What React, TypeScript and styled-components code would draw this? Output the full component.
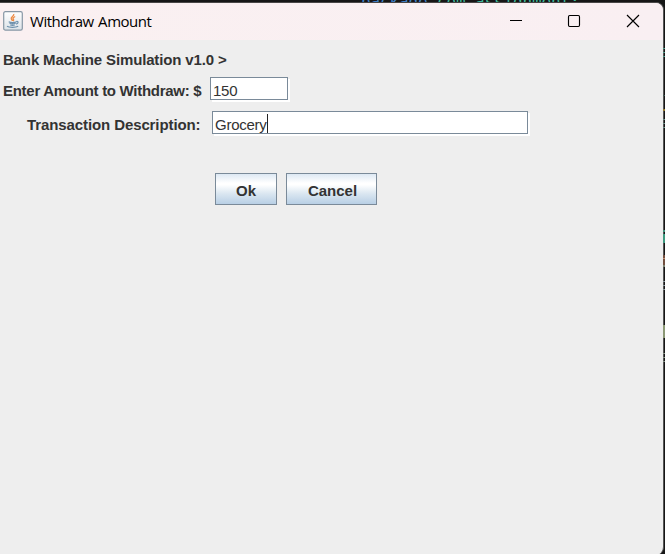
import React from "react";
import styled, { createGlobalStyle } from "styled-components";

const GlobalStyle = createGlobalStyle`
  * { box-sizing: border-box; }
  body { margin: 0; background: #161616; overflow: hidden; }
`;

const Desktop = styled.div`
  position: relative;
  width: 665px;
  height: 554px;
  padding-top: 2px;
  overflow: hidden;
  background: #161616;
`;

const CodeLine = styled.div`
  position: absolute;
  left: 361px;
  top: -6px;
  font: 16px/16px "DejaVu Sans Mono", monospace;
  letter-spacing: -0.13px;
  white-space: pre;
  color: #3fb89b;
`;

const Keyword = styled.span`
  color: #3f7fc4;
`;

const EditorEdge = styled.svg`
  position: absolute;
  right: 0;
  top: 0;
`;

const Window = styled.div`
  position: relative;
  display: flex;
  flex-direction: column;
  width: 664px;
  height: 553px;
  border-top: 1px solid #494747;
  border-right: 1px solid #555;
  border-radius: 0 8px 8px 0;
  overflow: hidden;
  background: #eeeeee;
`;

const TitleBar = styled.header`
  display: flex;
  align-items: center;
  flex: none;
  height: 37px;
  padding: 0 0 1px 3px;
  background: linear-gradient(90deg, #faf0f1, #f9eff2);
`;

const Title = styled.div`
  flex: 1;
  padding: 0 0 1px 7px;
  font: 15px/20px "Open Sans", sans-serif;
  letter-spacing: -0.47px;
  word-spacing: 1px;
  color: #000;
`;

const Controls = styled.div`
  display: flex;
  margin-right: 1px;
`;

const ControlButton = styled.button`
  display: flex;
  align-items: center;
  justify-content: center;
  width: 58.5px;
  height: 36px;
  padding: 0;
  border: 0;
  background: none;
`;

const Content = styled.main`
  display: flex;
  flex-direction: column;
  align-items: flex-start;
  padding: 11px 0 0 3px;
  font: bold 15px/18px "Liberation Sans", Arial, sans-serif;
  color: #333;
`;

const Heading = styled.div`
  height: 26px;
  letter-spacing: -0.15px;
  white-space: pre;
`;

const Row = styled.div<{ $indent?: number; $gap: number }>`
  display: flex;
  align-items: flex-start;
  gap: ${(p) => p.$gap}px;
  height: 24px;
  margin-bottom: 10px;
  padding-left: ${(p) => p.$indent ?? 0}px;
`;

const Label = styled.label<{ $width: number; $tracking: number }>`
  width: ${(p) => p.$width}px;
  padding-top: 5px;
  letter-spacing: ${(p) => p.$tracking}px;
  white-space: pre;
`;

const Field = styled.div<{ $width: number }>`
  display: flex;
  width: ${(p) => p.$width}px;
  height: 23px;
  padding: 4px 0 0 2px;
  border: 1px solid #7a8a99;
  background: #fff;
  box-shadow: 2px 2px 0 #fff;
  font-weight: normal;
  line-height: 18px;
  letter-spacing: -0.25px;
`;

const Caret = styled.span`
  width: 1px;
  height: 19px;
  margin-top: -2px;
  background: #222;
`;

const Actions = styled.div`
  display: flex;
  gap: 9px;
  padding: 28px 0 0 212px;
`;

const ActionButton = styled.button<{ $width: number; $nudge?: number }>`
  width: ${(p) => p.$width}px;
  height: 32px;
  padding: 3px 0 0 ${(p) => p.$nudge ?? 0}px;
  border: 1px solid #7a8a99;
  background: linear-gradient(#dde8f3 0%, #ffffff 30%, #ffffff 36%, #dbe7f1 65%, #b8cfe5 100%);
  color: #333;
  font: bold 15px/18px "Liberation Sans", Arial, sans-serif;
`;

const JavaIcon = () => (
  <svg width="20" height="20" viewBox="0 0 20 20" fill="none">
    <defs>
      <linearGradient id="tile" x1="0" y1="0" x2="0" y2="1">
        <stop stopColor="#ffffff" />
        <stop offset="1" stopColor="#dce3e9" />
      </linearGradient>
    </defs>
    <rect x=".7" y=".7" width="18.6" height="18.4" rx="1.7" fill="url(#tile)" stroke="#8797a5" strokeWidth="1.2" />
    <path d="M10.7 3c1 2-3.5 2.9-2.4 4.8.3.8 1 1.3 1.2 2.2M12.2 5.5c-2.5 1.1-2.6 1.8-1.7 2.9.4.6.1 1.1-.4 1.7" stroke="#ed8b45" strokeWidth="1.35" />
    <path d="M5.7 10.7c2 .9 5.8.8 7.8 0M6.5 12.3c2 .8 4.2.7 6.2 0M7.2 14c1.6.5 3.1.5 4.6 0M13.3 10.5c2.3-.6 2.5 1.7-.2 2.6M4 15.3c2 1.3 8.6 1.4 11.2 0" stroke="#6f91ad" strokeWidth="1.2" />
  </svg>
);

const edgeMarks: [number, number, string][] = [
  [48, 1, "#4d9786"], [52, 1, "#4d9786"], [56, 1, "#4d9786"],
  [95, 1, "#405650"], [109, 2, "#93772e"],
  [119, 1, "#698b84"], [123, 1, "#698b84"], [127, 1, "#698b84"],
  [230, 2, "#419079"], [234, 9, "#3e9a80"],
  [255, 10, "#724f3f"], [258, 1, "#bd8b70"], [265, 2, "#7e8371"],
  [281, 1, "#87949a"], [285, 1, "#87949a"], [289, 1, "#87949a"],
  [325, 13, "#8b9875"], [353, 1, "#849084"], [357, 1, "#849084"], [361, 1, "#849084"],
];

export default function App() {
  return (
    <>
      <GlobalStyle />
      <Desktop>
        <CodeLine><Keyword>package</Keyword> com.assignment;</CodeLine>
        <Window>
          <TitleBar>
            <JavaIcon />
            <Title>Withdraw Amount</Title>
            <Controls>
              <ControlButton aria-label="Minimize">
                <svg width="14" height="14"><path d="M1 6.5h12" stroke="#000" /></svg>
              </ControlButton>
              <ControlButton aria-label="Maximize">
                <svg width="14" height="14"><rect x="1.5" y="1.5" width="11" height="11" rx="1.2" fill="none" stroke="#000" strokeWidth="1.15" /></svg>
              </ControlButton>
              <ControlButton aria-label="Close">
                <svg width="14" height="14"><path d="M1 1l12 12M13 1L1 13" stroke="#000" strokeWidth="1.15" /></svg>
              </ControlButton>
            </Controls>
          </TitleBar>
          <Content>
            <Heading>{"Bank Machine Simulation v1.0 >"}</Heading>
            <Row $gap={8}>
              <Label $width={199} $tracking={-0.28}>Enter Amount to Withdraw: $</Label>
              <Field $width={78}>150</Field>
            </Row>
            <Row $indent={24} $gap={11}>
              <Label $width={174} $tracking={-0.1}>Transaction Description:</Label>
              <Field $width={316}>Grocery<Caret /></Field>
            </Row>
            <Actions>
              <ActionButton $width={62}>Ok</ActionButton>
              <ActionButton $width={91} $nudge={2}>Cancel</ActionButton>
            </Actions>
          </Content>
        </Window>
        <EditorEdge width="2" height="554">
          {edgeMarks.map(([y, height, color]) => (
            <rect key={y} x="0" y={y} width="2" height={height} fill={color} />
          ))}
        </EditorEdge>
      </Desktop>
    </>
  );
}
